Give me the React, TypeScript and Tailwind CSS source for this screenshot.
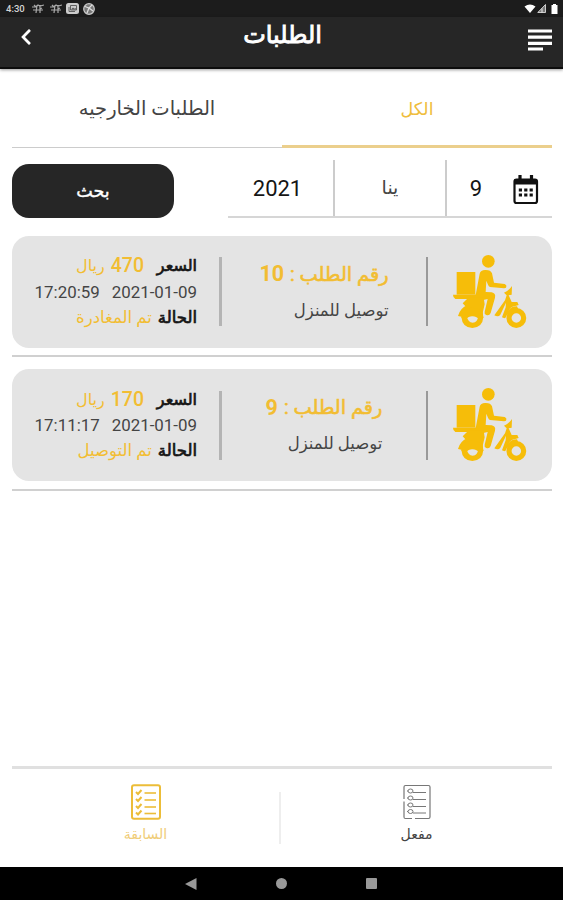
import { FaChevronLeft } from 'react-icons/fa';

interface Order {
  id: number;
  price: number;
  date: string;
  time: string;
  status: string;
  type: string;
}

const orders: Order[] = [
  { id: 10, price: 470, date: '2021-01-09', time: '17:20:59', status: 'تم المغادرة', type: 'توصيل للمنزل' },
  { id: 9, price: 170, date: '2021-01-09', time: '17:11:17', status: 'تم التوصيل', type: 'توصيل للمنزل' },
];

function StatusBar() {
  return (
    <div dir="ltr" className="flex h-[17px] items-center justify-between bg-[#1c1c1c] pl-[6px] pr-[5px] text-[#d4d4d4]">
      <div className="flex items-center gap-[6px]">
        <span className="w-[20px] text-[9.5px] font-medium leading-none">4:30</span>
        <BugIcon />
        <BugIcon />
        <svg width="13" height="11" viewBox="0 0 13 11" className="-ml-[2px]">
          <rect width="13" height="11" rx="2.5" fill="#ccc" />
          <path d="M3 4v4.500h6M4.500 2.500h6v4.500h-6z" fill="none" stroke="#555" strokeWidth="0.900" />
          <path d="M5 6.500l2-2 1.300 1.200 1-.7 1.200 1.500z" fill="#555" />
        </svg>
        <svg width="12" height="12" viewBox="0 0 12 12" className="-ml-[2px]">
          <circle cx="6" cy="6" r="5.300" fill="#777" stroke="#ccc" strokeWidth="1.200" />
          <path d="M2 3.500l4 1.500 3-3M6 5l-2 5M6 5l4 3" fill="none" stroke="#ddd" strokeWidth="1.300" />
        </svg>
      </div>
      <div className="flex items-center gap-[1px]">
        <svg width="12" height="9" viewBox="0 0 12 9">
          <path d="M.5 2.500Q6-1.500 11.500 2.500L6 9z" fill="#fff" />
        </svg>
        <svg width="9" height="9" viewBox="0 0 9 9">
          <path d="M8.500.5v8H.8z" fill="#777" stroke="#ddd" strokeWidth="0.900" />
          <path d="M5 8.500V4.500" stroke="#eee" strokeWidth="1" />
        </svg>
        <svg width="7" height="10" viewBox="0 0 7 10" className="ml-[4px]">
          <path d="M2 0h3v1h1.500v9h-6V1H2z" fill="#fff" />
        </svg>
      </div>
    </div>
  );
}

function BugIcon() {
  return (
    <svg width="12" height="11" viewBox="0 0 12 11" fill="none" stroke="#aaa" strokeWidth="1.200">
      <path d="M0 4h4l2-2 2 1 4-1M1 7h10M4 10l1-8M8 10V2M2 2l2 2M10 5L8 6" />
    </svg>
  );
}

function CalendarIcon() {
  return (
    <svg width="26" height="30" viewBox="0 0 26 30" className="mt-[3px]">
      <path d="M7 0v5M18.500 0v5" stroke="#111" strokeWidth="3.200" />
      <rect x="1.500" y="4.500" width="22.500" height="23.500" rx="2" fill="none" stroke="#111" strokeWidth="2.200" />
      <path d="M1.500 4h22.500v5.500H1.500z" fill="#111" />
      <path
        d="M5.800 13.500h3.200v3H5.800zM11.200 13.500h3.200v3h-3.200zM16.600 13.500h3.200v3h-3.200zM5.800 18.500h3.200v3H5.800zM11.200 18.500h3.200v3h-3.200zM16.600 18.500h3.200v3h-3.200z"
        fill="#111"
      />
    </svg>
  );
}

function ScooterIcon() {
  return (
    <svg width="74" height="74" viewBox="39 30 222 222" fill="#f6bd09">
      <circle cx="145" cy="49" r="19" />
      <path d="M50 81h56v68H50z" />
      <path d="M39 149h80v13H46q-7-4-7-13z" />
      {/* rider */}
      <path d="M119 86q3-11 16-11 17-1 21 10l6 28 32 4q7 3 5 9-1 4-7 4l-42-4q-4-1-6-7l-5-12-2 34 18 1q13 3 10 16l-13 46q-4 9-13 6-7-3-5-10l9-38-13 3-2 10v12l-42 8-18-20 20-20h16l4-10z" />
      {/* rear body and wheel */}
      <path d="M83 158h48l3 20-6 26 2 14h-18q-14-12-31 1l-27-6q6-24 29-33z" />
      <path d="M64 216h17q3 16 17 17 15-1 16-17h16q-2 31-33 33-30-1-33-33z" />
      <path d="M66 196q32-18 62 4l2 18h-16q-18-8-33 0H64z" />
      {/* steering column */}
      <path d="M216 123l-1 26-9 2 9 20h17l4 9-10 3q-14 2-19 12l-9 22q-4 5-12 0l11-30 1-14-17 36q-6 9-18 2l32-45 5-15-8-8q14-5 24-20z" />
      <circle cx="229" cy="219" r="22" fill="none" stroke="#f6bd09" strokeWidth="15.500" />
      <path d="M199 206q9-22 32-22l5 12-26 17z" />
    </svg>
  );
}

function ChecklistIcon({ checked }: { checked?: boolean }) {
  const rows = [9, 16, 23, 29.5];
  if (checked) {
    return (
      <svg width="30" height="36" viewBox="0 0 30 36" fill="none" stroke="#ecbd38">
        <rect x="1" y="1.200" width="28" height="33.500" rx="2" strokeWidth="2" />
        {rows.map((y) => (
          <g key={y} strokeWidth="1.600">
            <path d={`M5 ${y - 1}l2 2 3.500-4`} strokeWidth="2" />
            <path d={`M13.500 ${y}h11.500`} />
          </g>
        ))}
      </svg>
    );
  }
  return (
    <svg width="28" height="36" viewBox="0 0 28 36" fill="none" stroke="#777">
      <path d="M1 15V3q0-1.500 1.500-1.500h23q1.500 0 1.500 1.500v30q0 1.500-1.500 1.500H12M9 34.500H2.500Q1 34.500 1 33V17.500" strokeWidth="1.200" />
      {rows.map((y) => (
        <g key={y}>
          <ellipse cx="7.500" cy={y - 2} rx="2.500" ry="2" />
          <path d={`M4 ${y - 2}h1M10 ${y - 0.5}h13`} />
        </g>
      ))}
    </svg>
  );
}

function OrderCard({ order }: { order: Order }) {
  return (
    <div className="h-[133.500px] border-b-2 border-[#d0d0d0] pt-[12px]">
      <div className="flex h-[112px] items-center rounded-[17px] bg-[#e4e4e4]">
        <div className="flex w-[124px] shrink-0 justify-center">
          <ScooterIcon />
        </div>
        <div className="h-[69px] w-[2px] bg-[#999]" />
        <div className="flex w-[204px] flex-col items-center">
          <div>
            <h2 className="flex h-[36px] items-center gap-[6px] pt-[2px] whitespace-nowrap text-[19.4px] text-[#f2bd32]">
              <span className="[-webkit-text-stroke:0.600px_#f2bd32]">رقم الطلب :</span>
              <span className="text-[21.5px] font-bold">{order.id}</span>
            </h2>
            <p className="h-[36px] text-[16.5px] leading-[37px] text-[#444]">{order.type}</p>
          </div>
        </div>
        <div className="h-[69px] w-[3px] bg-[#b4b4b4]" />
        <div className="flex w-[186px] shrink-0 flex-col pr-[22px] whitespace-nowrap">
          <div className="flex h-[26px] items-center text-[16px]">
            <span className="w-[40px] [-webkit-text-stroke:0.700px_#151515]">السعر</span>
            <span className="mr-[13px] text-[19.5px] font-medium text-[#f2bd32]">{order.price}</span>
            <span className="mr-[6px] text-[#f2bd32]">ريال</span>
          </div>
          <div className="flex h-[27px] items-center gap-[12px] text-[16.9px] text-[#444]">
            <span>{order.date}</span>
            <span>{order.time}</span>
          </div>
          <div className="flex h-[24px] items-center gap-[6px] text-[16.5px]">
            <span className="[-webkit-text-stroke:0.700px_#151515]">الحالة</span>
            <span className="text-[#f2bd32]">{order.status}</span>
          </div>
        </div>
      </div>
    </div>
  );
}

export default function App() {
  return (
    <div dir="rtl" className="flex h-[900px] w-[563px] flex-col overflow-hidden bg-white font-[Roboto,'DejaVu_Sans',sans-serif] text-[#151515]">
      <StatusBar />

      {/* App bar */}
      <header className="flex h-[52px] shrink-0 items-start justify-between border-b-2 border-[#0c0c0c] bg-[#262626] pr-[11px] pl-[20px] text-white shadow-[0_1px_3px_rgba(0,0,0,0.4)]">
        <svg width="24" height="22" viewBox="0 0 24 22" className="mt-[12px]">
          <path d="M0 2h24M0 8.200h24M0 14.400h24M0 20h15" stroke="#fff" strokeWidth="3.200" />
        </svg>
        <h1 className="pl-[5px] text-[24px] leading-[37px] [-webkit-text-stroke:0.900px_white]">الطلبات</h1>
        <FaChevronLeft className="mt-[11px] h-[18px] w-[12px]" />
      </header>

      <main className="flex grow flex-col pr-[11px] pl-[12px]">
        {/* Tabs */}
        <nav className="flex h-[79px] text-[19.5px]">
          <button className="w-[270px] border-b-3 border-[#ebcf8c] pt-[4px] text-[17.5px] text-[#efbd3c]">الكل</button>
          <button className="grow border-b border-[#ccc] pt-[2px] text-[#444]">الطلبات الخارجيه</button>
        </nav>

        {/* Date filter */}
        <div className="mt-[12px] flex h-[58px] justify-between">
          <div className="flex w-[324px] items-center border-b-2 border-[#d6d6d6] text-[22px]">
            <div className="flex h-full w-[107px] items-center gap-[31px] border-l-2 border-[#ccc] pr-[13px]">
              <CalendarIcon />
              <span>9</span>
            </div>
            <div className="flex h-full w-[112px] items-center justify-center border-l-2 border-[#ccc] text-[19px] text-[#444]">ينا</div>
            <div className="flex grow items-center justify-center pr-[6px]">2021</div>
          </div>
          <button className="mt-[4px] h-[54px] w-[162px] rounded-[17px] bg-[#262626] text-[17.5px] text-white [-webkit-text-stroke:0.400px_white]">بحث</button>
        </div>

        <section className="mt-[5.500px]">
          {orders.map((order) => (
            <OrderCard key={order.id} order={order} />
          ))}
        </section>

        {/* Bottom tabs */}
        <footer className="mt-auto flex h-[101px] items-center border-t-3 border-[#e0e0e0] text-[14px]">
          <button className="flex w-[271px] flex-col items-center gap-[3px] pb-[8px] text-[#444]">
            <ChecklistIcon />
            <span className="leading-[22px]">مفعل</span>
          </button>
          <div className="h-[52px] w-[2px] bg-[#eee]" />
          <button className="flex grow flex-col items-center gap-[3px] pb-[8px] text-[#f0cd78]">
            <ChecklistIcon checked />
            <span className="leading-[22px]">السابقة</span>
          </button>
        </footer>
      </main>

      {/* System navigation */}
      <div dir="ltr" className="flex h-[33px] shrink-0 items-center justify-center gap-[79px] bg-black pr-[1px]">
        <svg width="12" height="12" viewBox="0 0 12 12" fill="#999">
          <path d="M0 6L11.500 0v12z" />
        </svg>
        <div className="h-[11px] w-[11px] rounded-full bg-[#999]" />
        <div className="h-[11px] w-[11px] rounded-[1px] bg-[#999]" />
      </div>
    </div>
  );
}
